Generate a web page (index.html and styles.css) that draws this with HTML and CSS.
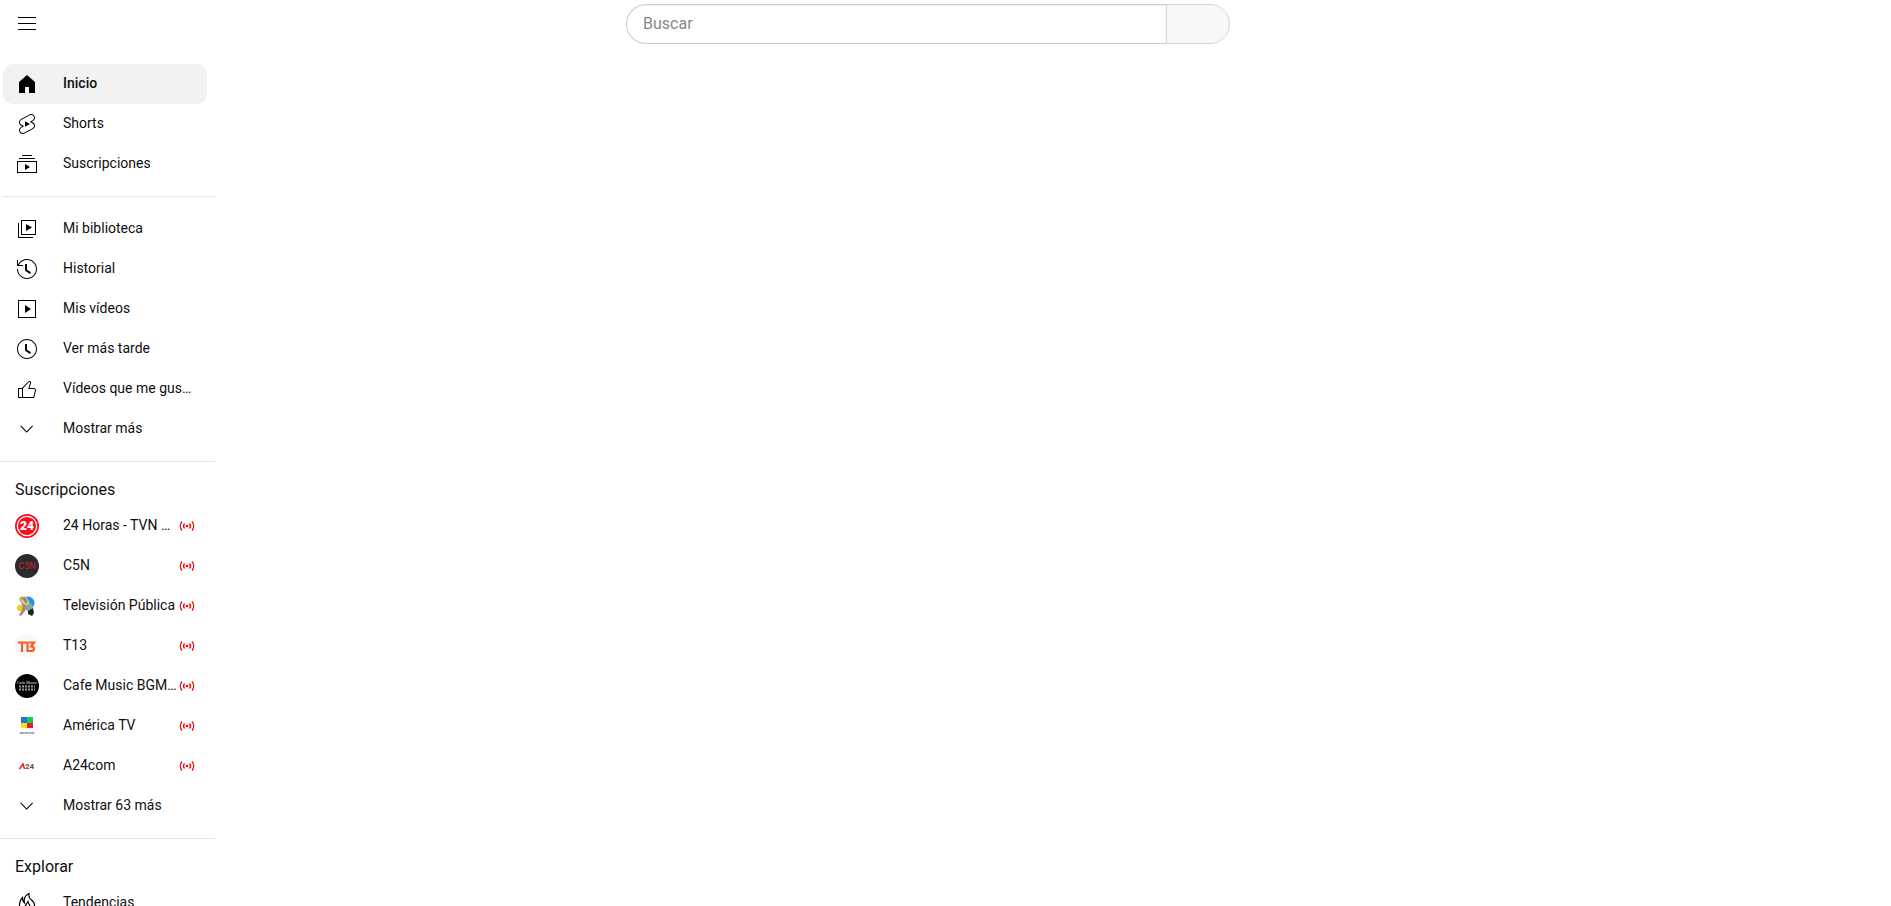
FILE: index.html
```html
<!DOCTYPE html>
<html lang="es">
<head>
  <meta charset="UTF-8">
  <meta name="viewport" content="width=device-width, initial-scale=1.0">
  <title>Inicio</title>
  <link rel="stylesheet" href="styles.css">
</head>
<body>
  <header class="topbar">
    <button class="menu-btn" type="button" aria-label="Menú">
      <svg class="icon" viewBox="0 0 24 24"><path d="M21 6H3V5h18v1zm0 5H3v1h18v-1zm0 6H3v1h18v-1z"/></svg>
    </button>
    <form class="search">
      <input class="search-input" type="text" placeholder="Buscar" aria-label="Buscar">
      <button class="search-btn" type="submit" aria-label="Enviar búsqueda"></button>
    </form>
  </header>

  <nav class="sidebar">
    <div class="section section-main">
      <a class="item active" href="#">
        <svg class="icon" viewBox="0 0 24 24"><path d="M4 10v11h6v-6h4v6h6V10l-8-7z"/></svg>
        <span class="label">Inicio</span>
      </a>
      <a class="item" href="#">
        <svg class="icon" viewBox="0 0 24 24"><path d="M10 14.65v-5.3L15 12l-5 2.65zm7.77-4.33-1.2-.5L18 9.06c1.84-.96 2.53-3.23 1.56-5.06s-3.24-2.53-5.07-1.56L6 6.94c-1.29.68-2.07 2.04-2 3.49.07 1.42.93 2.67 2.22 3.25.03.01 1.2.5 1.2.5L6 14.93c-1.83.97-2.53 3.24-1.56 5.07.97 1.83 3.24 2.53 5.07 1.56l8.5-4.5c1.29-.68 2.06-2.04 1.99-3.49-.07-1.42-.94-2.68-2.23-3.25zm-.23 5.86-8.5 4.5c-1.34.71-3.01.2-3.72-1.14-.71-1.34-.2-3.01 1.14-3.72l2.04-1.08v-1.21l-.69-.28-1.11-.46c-.99-.41-1.65-1.35-1.7-2.41-.05-1.06.52-2.06 1.46-2.56l8.5-4.5c1.34-.71 3.01-.2 3.72 1.14.71 1.34.2 3.01-1.14 3.72L15.5 9.26v1.21l1.8.74c.99.41 1.65 1.35 1.7 2.41.05 1.06-.52 2.06-1.46 2.56z"/></svg>
        <span class="label">Shorts</span>
      </a>
      <a class="item" href="#">
        <svg class="icon" viewBox="0 0 24 24"><path d="M10 18v-6l5 3-5 3zm7-15H7v1h10V3zm3 3H4v1h16V6zm2 3H2v12h20V9zM3 10h18v10H3V10z"/></svg>
        <span class="label">Suscripciones</span>
      </a>
    </div>

    <div class="section">
      <a class="item" href="#">
        <svg class="icon" viewBox="0 0 24 24"><path d="m11 7 6 3.5-6 3.5V7zm7 13H4V6H3v15h15v-1zm3-2H6V3h15v15zM7 17h13V4H7v13z"/></svg>
        <span class="label">Mi biblioteca</span>
      </a>
      <a class="item" href="#">
        <svg class="icon" viewBox="0 0 24 24"><path d="M14.97 16.95 10 13.87V7h2v5.76l4.03 2.49-1.06 1.7zM22 12c0 5.51-4.49 10-10 10S2 17.51 2 12h1c0 4.96 4.04 9 9 9s9-4.04 9-9-4.04-9-9-9C8.81 3 5.92 4.64 4.28 7.38c-.11.18-.22.37-.31.56L3.94 8H8v1H1.96V3h1v4.74c.04-.09.07-.17.11-.25.11-.22.23-.42.35-.63C5.22 3.86 8.51 2 12 2c5.51 0 10 4.49 10 10z"/></svg>
        <span class="label">Historial</span>
      </a>
      <a class="item" href="#">
        <svg class="icon" viewBox="0 0 24 24"><path d="m10 8 6 4-6 4V8zm11-5v18H3V3h18zm-1 1H4v16h16V4z"/></svg>
        <span class="label">Mis vídeos</span>
      </a>
      <a class="item" href="#">
        <svg class="icon" viewBox="0 0 24 24"><path d="M14.97 16.95 10 13.87V7h2v5.76l4.03 2.49-1.06 1.7zM12 3c-4.96 0-9 4.04-9 9s4.04 9 9 9 9-4.04 9-9-4.04-9-9-9m0-1c5.52 0 10 4.48 10 10s-4.48 10-10 10S2 17.52 2 12 6.48 2 12 2z"/></svg>
        <span class="label">Ver más tarde</span>
      </a>
      <a class="item" href="#">
        <svg class="icon" viewBox="0 0 24 24"><path d="M18.77 11h-4.23l1.52-4.94C16.38 5.03 15.54 4 14.38 4c-.58 0-1.14.24-1.52.65L7 11H3v10h14.43c1.06 0 1.98-.67 2.19-1.61l1.34-6c.27-1.24-.78-2.39-2.19-2.39zM7 20H4v-8h3v8zm12.98-6.83-1.34 6c-.1.48-.61.83-1.21.83H8v-8.61l5.6-6.06c.19-.21.48-.33.78-.33.26 0 .5.11.63.3.07.1.15.26.09.47l-1.52 4.94-.4 1.29h5.58c.41 0 .8.17 1.03.46.13.15.26.4.19.71z"/></svg>
        <span class="label">Vídeos que me gustan</span>
      </a>
      <a class="item" href="#">
        <svg class="icon" viewBox="0 0 24 24"><path d="m18 9.28-6.35 6.35-6.37-6.35.72-.71 5.64 5.65 5.65-5.65z"/></svg>
        <span class="label">Mostrar más</span>
      </a>
    </div>

    <div class="section">
      <h3 class="section-title">Suscripciones</h3>
      <a class="item" href="#">
        <svg class="icon" viewBox="0 0 24 24">
          <circle cx="12" cy="12" r="12" fill="#fb0d1b"/>
          <circle cx="12" cy="12" r="9.7" fill="none" stroke="#fff" stroke-width="1.2"/>
          <text class="logo-24" x="12" y="16" text-anchor="middle">24</text>
        </svg>
        <span class="label">24 Horas - TVN Chile</span>
        <svg class="live" viewBox="0 0 16 16"><use href="#live"/></svg>
      </a>
      <a class="item" href="#">
        <svg class="icon" viewBox="0 0 24 24">
          <circle cx="12" cy="12" r="12" fill="#2b2b2d"/>
          <text class="logo-c5n" x="12" y="15" text-anchor="middle">C5N</text>
        </svg>
        <span class="label">C5N</span>
        <svg class="live" viewBox="0 0 16 16"><use href="#live"/></svg>
      </a>
      <a class="item" href="#">
        <svg class="icon" viewBox="0 0 24 24">
          <circle cx="13" cy="9" r="6.5" fill="#2a8df0"/>
          <circle cx="5" cy="14" r="3" fill="#fbc60d"/>
          <path d="M4 4l3-2 4 1 3 4 1 5-4 2-3-4-4-3z" fill="#cfc28f"/>
          <path d="M8 10l4 2-2 5-4 5-2-1 3-5z" fill="#a88972"/>
          <path d="M12 11l4-2 2 5-4 4-3-2z" fill="#7fae9c"/>
          <path d="M13 17l5-3 1 5-2 3-4-2z" fill="#20261a"/>
          <path d="M6 4l3 1 2 4M9 3l3 5" fill="none" stroke="#7b6b45"/>
        </svg>
        <span class="label">Televisión Pública</span>
        <svg class="live" viewBox="0 0 16 16"><use href="#live"/></svg>
      </a>
      <a class="item" href="#">
        <svg class="icon" viewBox="0 0 24 24">
          <circle cx="12" cy="12" r="12" fill="#f8f8f4"/>
          <path d="M3 8.500h8M7 8v10M10.500 8.500h2V18M14 8.500h5l-3 4c4 0 4 4.500 0 4.500h-2.500" fill="none" stroke="#fb5a24" stroke-width="2.200"/>
        </svg>
        <span class="label">T13</span>
        <svg class="live" viewBox="0 0 16 16"><use href="#live"/></svg>
      </a>
      <a class="item" href="#">
        <svg class="icon" viewBox="0 0 24 24">
          <circle cx="12" cy="12" r="12"/>
          <text class="logo-cafe" x="12" y="10" text-anchor="middle">Cafe Music</text>
          <path d="M4 12.500h16M4 15.500h16" stroke="#999" stroke-width="2" stroke-dasharray="2 1"/>
        </svg>
        <span class="label">Cafe Music BGM channel</span>
        <svg class="live" viewBox="0 0 16 16"><use href="#live"/></svg>
      </a>
      <a class="item" href="#">
        <svg class="icon" viewBox="0 0 24 24">
          <path d="M6 3h6v6H6z" fill="#1b73e8"/>
          <path d="M12 3h6v6h-6z" fill="#0fd23c"/>
          <path d="M6 9h6v5H6z" fill="#fbe40f"/>
          <path d="M12 9h6v5h-6z" fill="#f5123c"/>
          <text class="logo-america" x="12" y="20" text-anchor="middle">america</text>
        </svg>
        <span class="label">América TV</span>
        <svg class="live" viewBox="0 0 16 16"><use href="#live"/></svg>
      </a>
      <a class="item" href="#">
        <svg class="icon" viewBox="0 0 24 24">
          <path d="M4.500 15 8 10l1.500 5" fill="none" stroke="#e3202f" stroke-width="1.500"/>
          <text class="logo-a24" x="10" y="15">24</text>
        </svg>
        <span class="label">A24com</span>
        <svg class="live" viewBox="0 0 16 16"><use href="#live"/></svg>
      </a>
      <a class="item" href="#">
        <svg class="icon" viewBox="0 0 24 24"><path d="m18 9.28-6.35 6.35-6.37-6.35.72-.71 5.64 5.65 5.65-5.65z"/></svg>
        <span class="label">Mostrar 63 más</span>
      </a>
    </div>

    <div class="section">
      <h3 class="section-title">Explorar</h3>
      <a class="item" href="#">
        <svg class="icon" viewBox="0 0 24 24"><path d="M14 2.500C10 4.500 8.500 8 9.500 12 8 11 7.500 9 7.500 6.500 5 9 4.500 12 4.500 14.500c0 4 3.500 7 7.500 7s7.500-3 7.500-7c0-2.500-1-4-3-5.500C14.500 7.500 13.500 5.500 14 2.500zM13 10.500c-1 2-3 3.500-3 5.500 0 3 5 3 5 0 0-2-1.500-3-2-5.500z" fill="none" stroke="#000" stroke-width="1.200"/></svg>
        <span class="label">Tendencias</span>
      </a>
    </div>
  </nav>

  <svg class="defs" width="0" height="0">
    <symbol id="live" viewBox="0 0 16 16">
      <circle cx="8" cy="8" r="1.300" fill="#f00"/>
      <path d="M5.500 5.500a4 4 0 0 0 0 5M10.500 5.500a4 4 0 0 1 0 5M3 3.500a7 7 0 0 0 0 9M13 3.500a7 7 0 0 1 0 9" fill="none" stroke="#f00" stroke-width="1.300"/>
    </symbol>
  </svg>
</body>
</html>
```
FILE: styles.css
```css
body {
  margin: 0;
  height: 100vh;
  overflow: hidden;
  display: flex;
  flex-direction: column;
  background: #fff;
  color: #0f0f0f;
  font-family: Roboto, Arial, sans-serif;
  font-size: 14px;
}

.topbar {
  display: grid;
  grid-template-columns: 1fr minmax(0, 604px) 1fr;
  align-items: center;
  height: 48px;
  flex: none;
  padding: 0 50px 0 15px;
}

.menu-btn {
  justify-self: start;
  padding: 0;
  border: none;
  background: none;
  cursor: pointer;
}

.icon {
  display: block;
  flex: none;
  width: 24px;
  height: 24px;
}

.search {
  display: flex;
  height: 40px;
}

.search-input {
  flex: 1;
  min-width: 0;
  box-sizing: border-box;
  padding: 0 4px 2px 16px;
  border: 1px solid #ccc;
  border-right: none;
  border-radius: 40px 0 0 40px;
  box-shadow: inset 0 1px 2px #eee;
  font-family: inherit;
  font-size: 16px;
  outline: none;
}

.search-input::placeholder {
  color: #888;
}

.search-btn {
  width: 64px;
  border: 1px solid #d3d3d3;
  border-radius: 0 40px 40px 0;
  background: #f8f8f8;
  cursor: pointer;
}

.sidebar {
  flex: 1;
  min-height: 0;
  width: 215px;
  padding-top: 4px;
  box-sizing: border-box;
  overflow: hidden;
}

.section {
  padding: 12px 8px 12px 3px;
  border-bottom: 1px solid #e5e5e5;
}

.section-main {
  margin-left: 3px;
  padding-left: 0;
}

.section-title {
  margin: 0;
  padding: 5px 12px;
  font-size: 16px;
  font-weight: 400;
  line-height: 22px;
}

.item {
  display: flex;
  align-items: center;
  height: 40px;
  padding: 0 12px;
  border-radius: 10px;
  color: inherit;
  text-decoration: none;
}

.item:hover,
.item.active {
  background: #f2f2f2;
}

.item.active {
  font-weight: 500;
}

.label {
  flex: 1;
  margin-left: 24px;
  padding-bottom: 2px;
  line-height: 20px;
  white-space: nowrap;
  overflow: hidden;
  text-overflow: ellipsis;
}

.live {
  flex: none;
  width: 16px;
  height: 16px;
}

.defs {
  position: absolute;
}

.logo-24 {
  fill: #fff;
  font-size: 12px;
  font-weight: 900;
}

.logo-c5n {
  fill: #d0212c;
  font-size: 9px;
}

.logo-cafe {
  fill: #ddd;
  font-size: 4px;
}

.logo-america {
  fill: #333;
  font-size: 4px;
}

.logo-a24 {
  fill: #555;
  font-size: 8px;
  font-weight: 700;
}
```
